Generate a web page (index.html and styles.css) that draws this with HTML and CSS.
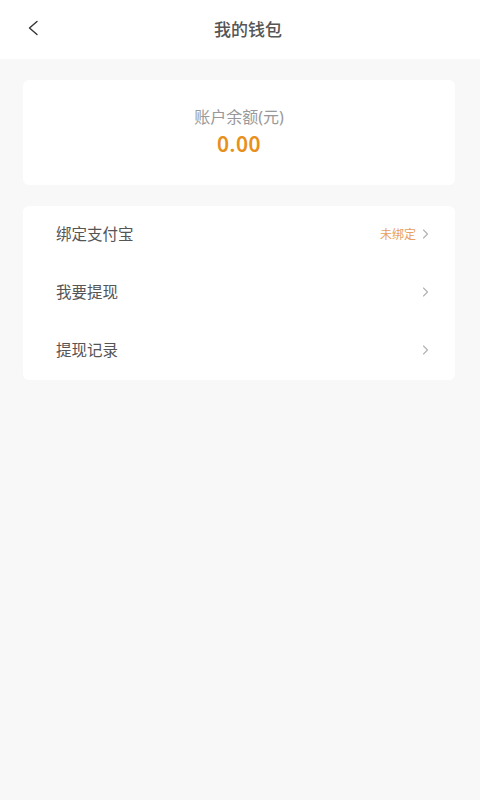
FILE: index.html
```html
<!DOCTYPE html>
<html lang="zh">
<head>
<meta charset="utf-8">
<title>我的钱包</title>
<link rel="stylesheet" href="styles.css">
</head>
<body>
<div class="page">
  <header class="topbar">
    <span class="back">
      <svg width="14" height="16" viewBox="0 0 14 16"><path d="M11 1.5 L3.5 8 L11 14.5" fill="none" stroke="#333" stroke-width="1.4" stroke-linecap="round" stroke-linejoin="round"/></svg>
    </span>
    <h1 class="title">我的钱包</h1>
  </header>
  <main class="content">
    <section class="card balance">
      <div class="balance-label">账户余额(元)</div>
      <div class="balance-amount">0.00</div>
    </section>
    <section class="card menu">
      <div class="row">
        <span class="row-label">绑定支付宝</span>
        <span class="row-right"><span class="status">未绑定</span><svg class="chev" width="7" height="10" viewBox="0 0 7 10"><path d="M1.5 1 L5.5 5 L1.5 9" fill="none" stroke="#b0b0b0" stroke-width="1.1" stroke-linecap="round" stroke-linejoin="round"/></svg></span>
      </div>
      <div class="row">
        <span class="row-label">我要提现</span>
        <span class="row-right"><svg class="chev" width="7" height="10" viewBox="0 0 7 10"><path d="M1.5 1 L5.5 5 L1.5 9" fill="none" stroke="#b0b0b0" stroke-width="1.1" stroke-linecap="round" stroke-linejoin="round"/></svg></span>
      </div>
      <div class="row">
        <span class="row-label">提现记录</span>
        <span class="row-right"><svg class="chev" width="7" height="10" viewBox="0 0 7 10"><path d="M1.5 1 L5.5 5 L1.5 9" fill="none" stroke="#b0b0b0" stroke-width="1.1" stroke-linecap="round" stroke-linejoin="round"/></svg></span>
      </div>
    </section>
  </main>
</div>
</body>
</html>
```
FILE: styles.css
```css
* { box-sizing: border-box; }
html, body {
  margin: 0;
  padding: 0;
  background: #f8f8f8;
  font-family: "Noto Sans", "Noto Sans CJK SC", sans-serif;
}
.page {
  width: 480px;
  min-height: 800px;
  background: #f8f8f8;
}
.topbar {
  height: 59px;
  background: #fff;
  display: flex;
  align-items: center;
  justify-content: center;
  position: relative;
}
.back {
  position: absolute;
  left: 26px;
  top: 20px;
  width: 14px;
  height: 16px;
  display: flex;
}
.title {
  margin: 0;
  margin-top: -2px;
  margin-left: 16px;
  font-size: 17px;
  font-weight: 500;
  color: #555;
}
.content {
  padding: 21px 25px 0 23px;
  display: flex;
  flex-direction: column;
  gap: 21px;
}
.card {
  background: #fff;
  border-radius: 6px;
}
.balance {
  height: 105px;
  display: flex;
  flex-direction: column;
  align-items: center;
  padding-top: 26px;
}
.balance-label {
  font-size: 16px;
  line-height: 22px;
  color: #999;
}
.balance-amount {
  font-size: 21px;
  line-height: 26px;
  margin-top: 3px;
  font-weight: 600;
  color: #e8901c;
  letter-spacing: 0.5px;
}
.menu {
  display: flex;
  flex-direction: column;
}
.row {
  height: 58px;
  display: flex;
  align-items: center;
  justify-content: space-between;
  padding: 0 26px 3px 33px;
}
.row-label {
  font-size: 15.5px;
  color: #555;
}
.row-right {
  display: flex;
  align-items: center;
  gap: 6px;
}
.status {
  font-size: 12px;
  color: #e8a060;
}
.chev { display: block; }
```
